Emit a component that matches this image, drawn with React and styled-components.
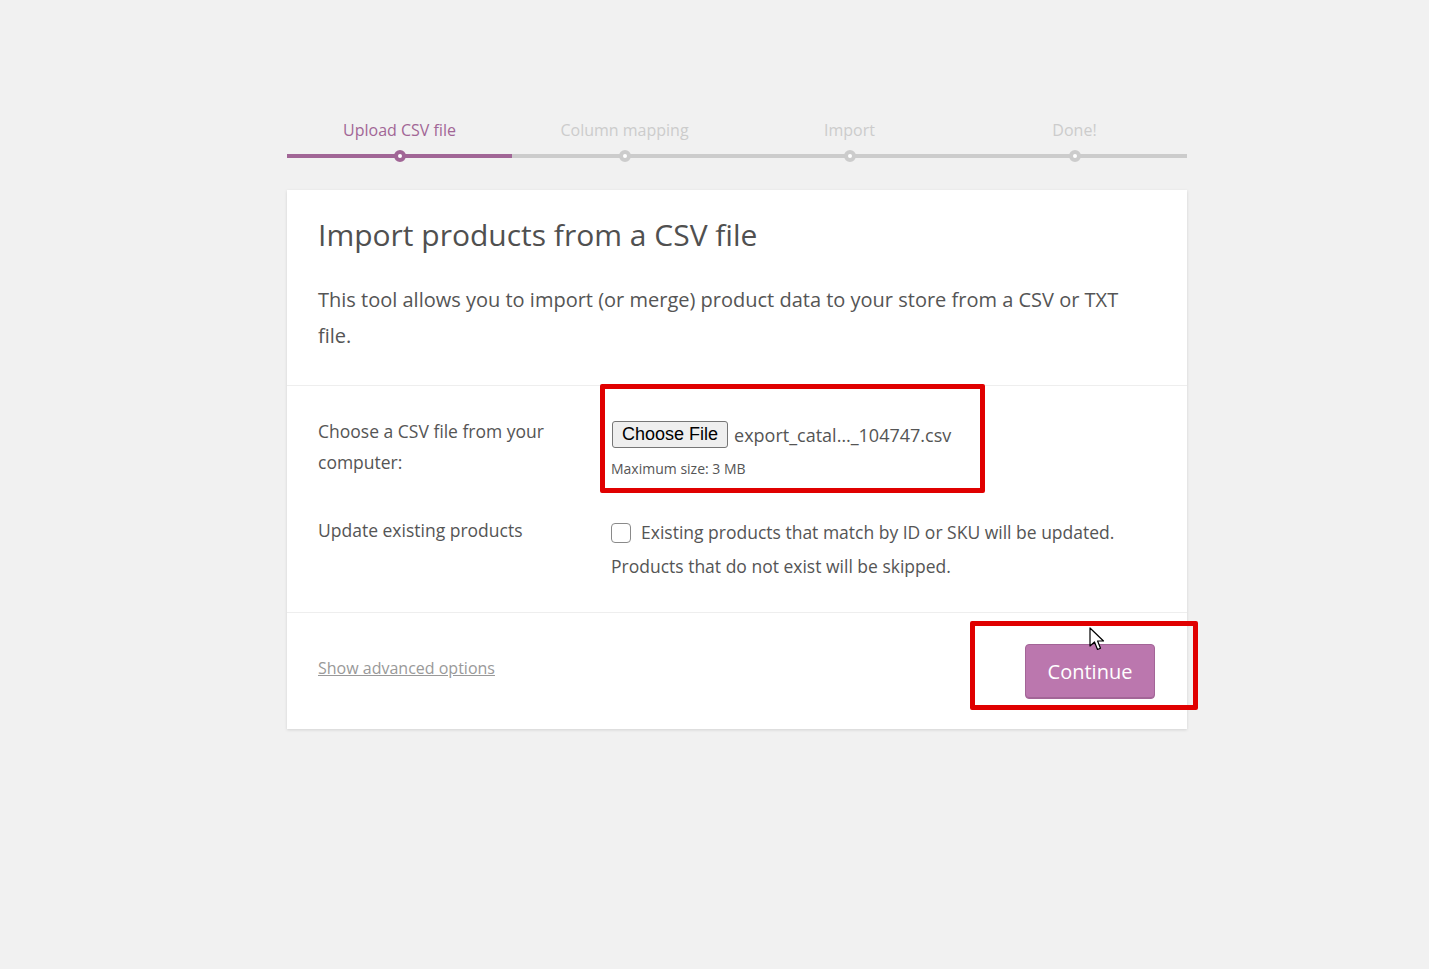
import React from 'react'
import styled, { createGlobalStyle } from 'styled-components'

const GlobalStyle = createGlobalStyle`
  html, body {
    margin: 0;
    padding: 0;
    background: #f1f1f1;
  }
  body {
    font-family: "Open Sans", "Noto Sans", sans-serif;
    color: #555;
  }
  * { box-sizing: border-box; }
`;

const steps = ['Upload CSV file', 'Column mapping', 'Import', 'Done!']

const App = () => {
  return (
    <Page>
      <GlobalStyle />
      <Wrapper>
        <Steps>
          {steps.map((s, i) => (
            <Step key={s} active={i === 0}>{s}</Step>
          ))}
        </Steps>
        <Card>
          <Header>
            <Title>Import products from a CSV file</Title>
            <Intro>This tool allows you to import (or merge) product data to your store from a CSV or TXT file.</Intro>
          </Header>
          <Fields>
            <Row>
              <Label>Choose a CSV file from your computer:</Label>
              <Field>
                <FileLine>
                  <FileButton type="button">Choose File</FileButton>
                  <FileName>export_catal…_104747.csv</FileName>
                </FileLine>
                <Small>Maximum size: 3 MB</Small>
              </Field>
            </Row>
            <Row>
              <Label>Update existing products</Label>
              <Field>
                <CheckText>
                  <Check type="checkbox" />
                  Existing products that match by ID or SKU will be updated. Products that do not exist will be skipped.
                </CheckText>
              </Field>
            </Row>
          </Fields>
          <Footer>
            <Advanced href="#">Show advanced options</Advanced>
            <Continue type="button">Continue</Continue>
          </Footer>
          <Highlight left={313} top={194} w={385} h={109} />
          <Highlight left={683} top={431} w={228} h={89} />
          <Cursor width="16" height="25" viewBox="0 0 16 25">
            <path d="M1 1 L1 19 L5.5 15 L8.5 22.5 L11.5 21.2 L8.6 14 L14.5 14 Z" fill="#fff" stroke="#000" strokeWidth="1.2" strokeLinejoin="round" />
          </Cursor>
        </Card>
      </Wrapper>
    </Page>
  )
}

export default App

const Page = styled.div`
  min-height: 969px;
  padding-top: 118px;
`;

const Wrapper = styled.div`
  width: 900px;
  margin-left: 287px;
`;

const Steps = styled.ol`
  list-style: none;
  margin: 0;
  padding: 0;
  display: flex;
`;

const Step = styled.li`
  flex: 1;
  position: relative;
  text-align: center;
  font-size: 16px;
  line-height: 24px;
  padding-bottom: 12px;
  color: ${p => (p.active ? '#a16696' : '#ccc')};
  border-bottom: 4px solid ${p => (p.active ? '#a16696' : '#ccc')};
  &::before {
    content: '';
    position: absolute;
    left: 50%;
    bottom: 0;
    width: 4px;
    height: 4px;
    margin-left: -6px;
    margin-bottom: -8px;
    border: 4px solid ${p => (p.active ? '#a16696' : '#ccc')};
    border-radius: 50%;
    background: #fff;
  }
`;

const Card = styled.div`
  position: relative;
  margin-top: 32px;
  background: #fff;
  box-shadow: 0 1px 3px rgba(0, 0, 0, 0.13);
`;

const Header = styled.div`
  padding: 24px 31px 31px;
  border-bottom: 1px solid #eee;
`;

const Title = styled.h2`
  margin: 0;
  font-size: 30px;
  font-weight: 400;
  line-height: 42px;
  color: #505050;
`;

const Intro = styled.p`
  margin: 26px 0 0;
  max-width: 820px;
  font-size: 20px;
  line-height: 36px;
`;

const Fields = styled.div`
  padding: 30px 31px 29px;
  display: flex;
  flex-direction: column;
  gap: 36px;
  border-bottom: 1px solid #eee;
`;

const Row = styled.div`
  display: grid;
  grid-template-columns: 293px 1fr;
`;

const Label = styled.div`
  font-size: 17.5px;
  line-height: 31px;
  width: 240px;
`;

const Field = styled.div`
  display: flex;
  flex-direction: column;
`;

const FileLine = styled.div`
  display: flex;
  align-items: center;
  gap: 6px;
  margin-top: 5px;
`;

const FileButton = styled.button`
  font-family: "Liberation Sans", Arial, sans-serif;
  font-size: 18px;
  height: 27px;
  padding: 0 9px;
  margin-left: 1px;
  color: #000;
  background: #efefef;
  border: 1px solid #767676;
  border-radius: 3px;
`;

const FileName = styled.span`
  font-size: 18px;
  color: #555;
`;

const Small = styled.div`
  font-size: 14px;
  line-height: 20px;
  margin-top: 11px;
`;

const CheckText = styled.label`
  font-size: 17.5px;
  line-height: 34px;
  max-width: 520px;
`;

const Check = styled.input`
  appearance: none;
  width: 20px;
  height: 20px;
  margin: 0 10px 0 0;
  vertical-align: -4px;
  border: 1px solid #8a8a8a;
  border-radius: 4px;
  background: #fff;
`;

const Footer = styled.div`
  display: flex;
  align-items: center;
  justify-content: space-between;
  padding: 31px 32px 30px 31px;
`;

const Advanced = styled.a`
  font-size: 16px;
  color: #999;
  text-decoration: underline;
  margin-bottom: 7px;
`;

const Continue = styled.button`
  font-family: inherit;
  width: 130px;
  height: 55px;
  font-size: 20px;
  color: #fff;
  background: #bb77ae;
  border: 1px solid #a36597;
  border-radius: 4px;
  box-shadow: inset 0 -1px 0 #a36597;
`;

const Highlight = styled.div`
  position: absolute;
  left: ${p => p.left}px;
  top: ${p => p.top}px;
  width: ${p => p.w}px;
  height: ${p => p.h}px;
  border: 5px solid #e00000;
  border-radius: 2px;
  pointer-events: none;
`;

const Cursor = styled.svg`
  position: absolute;
  left: 802px;
  top: 437px;
`;
